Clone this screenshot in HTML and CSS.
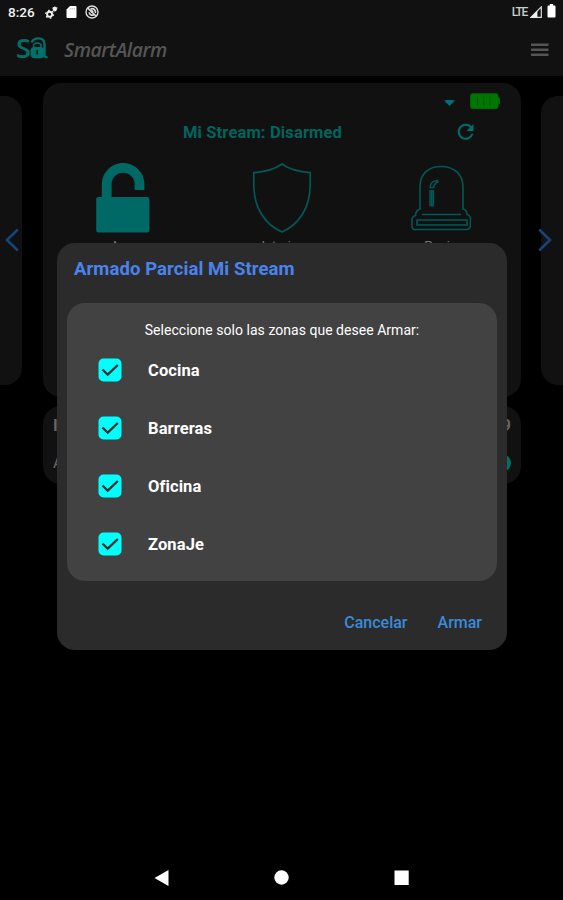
FILE: index.html
```html
<!DOCTYPE html>
<html lang="es">
<head>
<meta charset="utf-8">
<title>SmartAlarm</title>
<link rel="stylesheet" href="styles.css">
</head>
<body>
<div class="screen">
  <div class="status">
    <span class="clock">8:26</span>
    <svg class="s-gear" width="13" height="13" viewBox="0 0 13 13"><circle cx="4.6" cy="8.2" r="2.5" fill="none" stroke="#eee" stroke-width="1.9"/><circle cx="4.6" cy="8.2" r="3.9" fill="none" stroke="#eee" stroke-width="1.2" stroke-dasharray="1.8 2.28"/><circle cx="9.8" cy="3" r="2.2" fill="#eee"/><path d="M7.5 2h5M9.8.5v5" stroke="#eee"/></svg>
    <svg class="s-card" width="11" height="12" viewBox="0 0 11 12"><path d="M4 0h5.500q1 0 1 1v10q0 1-1 1h-8q-1 0-1-1V3.500z" fill="#fff"/><path d="M4.200 2v1.600M6.200 2v1.600M8.200 2v1.600" stroke="#aaa" stroke-width=".8"/></svg>
    <svg class="s-circle" width="14" height="14" viewBox="0 0 14 14" fill="none" stroke="#ddd"><circle cx="7" cy="7" r="6" stroke-width="1.400"/><path d="M2.500 2.800l9 8.700M4.200 7.200a3 3 0 0 0 4.500 2.500M5.500 4.200a3.300 3.300 0 0 1 4.800 3.900" stroke-width="1.600"/><circle cx="7" cy="6.600" r="1.100" fill="#ddd"/></svg>
    <span class="lte">LTE</span>
    <svg class="s-signal" width="12" height="12" viewBox="0 0 12 12"><path d="M.9 11.300L11.300.9v10.400z" fill="none" stroke="#ddd" stroke-width="1.200"/><path d="M.5 11.500L7.400 4.600v6.900z" fill="#eee"/></svg>
    <svg class="s-batt" width="9" height="14" viewBox="0 0 9 14"><path d="M2.800 0h3.400v1.500h1.300q1 0 1 1V12.500q0 1-1 1h-6q-1 0-1-1v-10q0-1 1-1h1.300z" fill="#fff"/></svg>
  </div>
  <header class="bar">
    <div class="logo"><span class="logo-s">S</span><svg width="18" height="22" viewBox="0 0 18 22"><path d="M1.500 5.500C3 2.400 5 1.400 8.300 1.400c4.400 0 6.200 2.500 6.200 6v11.300q0 1.600 3 1.500" fill="none" stroke="#00716a" stroke-width="2.400"/><rect x=".5" y="10" width="14" height="11.200" rx="4" fill="#00716a"/><path d="M3.500 11V9c0-4 7.500-4 7.500 0v2" fill="none" stroke="#00716a" stroke-width="1.500"/><path d="M7.200 13v4.500" stroke="#111" stroke-width="1.600"/></svg></div>
    <span class="brand">SmartAlarm</span>
    <svg class="menu" width="18" height="14" viewBox="0 0 18 14"><path d="M0 1.700h17.500M0 6.700h17.500M0 11.700h17.500" stroke="#555" stroke-width="2.500"/></svg>
  </header>
  <main class="carousel">
    <div class="side prev"></div>
    <section class="card">
      <div class="signals">
        <svg class="wifi" width="11" height="6" viewBox="0 0 11 6"><path d="M0 .4q5.500-1 11 0L5.500 6z" fill="#006f76"/></svg>
        <svg width="30" height="17" viewBox="0 0 30 17"><rect x=".6" y=".8" width="27.400" height="14.800" rx="2" fill="#007800" stroke="#006c00"/><rect x="28" y="4.500" width="2" height="6.500" rx=".8" fill="#006a00"/><path d="M7.500 3.500v9.500M13.800 3.500v9.500M20 3.500v9.500" stroke="#005c00" stroke-width="1.300"/></svg>
      </div>
      <div class="state"><span class="state-name">Mi Stream: Disarmed</span>
        <svg class="refresh" width="18" height="18" viewBox="0 0 18 18"><path d="M14.600 5A7 7 0 1 0 15.400 10.800" fill="none" stroke="#006f6a" stroke-width="2"/><path d="M16.500 1v7h-7z" fill="#006f6a"/></svg>
      </div>
      <div class="modes">
        <div class="mode"><svg width="54" height="70" viewBox="0 0 54 70"><path d="M10.700 36V21.200a16.400 16.400 0 0 1 32.800 0V27" fill="none" stroke="#006965" stroke-width="9.800"/><rect x=".2" y="34" width="53.200" height="35.500" rx="2.500" fill="#006965"/></svg><span>Arm</span></div>
        <div class="mode"><svg width="60" height="70" viewBox="0 0 60 70"><path d="M30 1C23 6 12 9 1.800 9.600V23C2 46 14 62 30 69 46 62 57.800 46 58.200 23V9.600C48 9 37 6 30 1z" fill="none" stroke="#005a57" stroke-width="1.700"/></svg><span>Interior</span></div>
        <div class="mode"><svg width="60" height="70" viewBox="0 0 60 70" fill="none" stroke="#005a57" stroke-width="1.600"><path d="M9 46V24C9 11 17 3.500 30 3.500S52 11 52 24v22q4 1 4 5.500 3.500 1 3.500 4.500v6q0 4.500-4.500 4.500H5.500Q1 67.500 1 63v-6q0-3.500 3.500-4.500Q5 47 9 46zM11 51.500h39M6 57h50v5H6z"/><path d="M19 24.500q.3-6.500 7.500-7l.5 1.500q-3.500 1-4.500 5.500zM19 28h3.500v14.500H19z" stroke-width="1.400"/><path d="M20.700 28v14" stroke-width="2"/></svg><span>Panic</span></div>
      </div>
    </section>
    <div class="side next"></div>
    <svg class="arrow left" width="15" height="24" viewBox="0 0 15 24"><path d="M12.800 1.500L2 12l10.800 10.500" fill="none" stroke="#124676" stroke-width="2.600"/></svg>
    <svg class="arrow right" width="15" height="24" viewBox="0 0 15 24"><path d="M2.200 1.500L13 12 2.200 22.500" fill="none" stroke="#124676" stroke-width="2.600"/></svg>
  </main>
  <section class="info">
    <div class="info-row"><span>I</span><span>9</span></div>
    <div class="info-row"><span class="thin">A</span><i class="knob"></i></div>
  </section>
  <nav class="nav">
    <svg width="16" height="18" viewBox="0 0 16 18"><path d="M.5 9L14.500 1v16z" fill="#fff"/></svg>
    <svg width="16" height="18" viewBox="0 0 16 18"><circle cx="7.500" cy="8.500" r="7.200" fill="#fff"/></svg>
    <svg width="16" height="18" viewBox="0 0 16 18"><path d="M.5 1.500h14.200V16H.5z" fill="#fff"/></svg>
  </nav>

  <div class="dialog" role="dialog">
    <h2>Armado Parcial Mi Stream</h2>
    <div class="zones">
      <p>Seleccione solo las zonas que desee Armar:</p>
      <div class="zone"><svg width="24" height="24" viewBox="0 0 24 24"><rect x=".5" y=".5" width="23" height="23" rx="5" fill="#00ffff"/><path d="M4.500 11.500l5.200 5.200L19.800 7" fill="none" stroke="#152c2c" stroke-width="2.300"/></svg><span>Cocina</span></div>
      <div class="zone"><svg width="24" height="24" viewBox="0 0 24 24"><rect x=".5" y=".5" width="23" height="23" rx="5" fill="#00ffff"/><path d="M4.500 11.500l5.200 5.200L19.800 7" fill="none" stroke="#152c2c" stroke-width="2.300"/></svg><span>Barreras</span></div>
      <div class="zone"><svg width="24" height="24" viewBox="0 0 24 24"><rect x=".5" y=".5" width="23" height="23" rx="5" fill="#00ffff"/><path d="M4.500 11.500l5.200 5.200L19.800 7" fill="none" stroke="#152c2c" stroke-width="2.300"/></svg><span>Oficina</span></div>
      <div class="zone"><svg width="24" height="24" viewBox="0 0 24 24"><rect x=".5" y=".5" width="23" height="23" rx="5" fill="#00ffff"/><path d="M4.500 11.500l5.200 5.200L19.800 7" fill="none" stroke="#152c2c" stroke-width="2.300"/></svg><span>ZonaJe</span></div>
    </div>
    <div class="actions"><span>Cancelar</span><span>Armar</span></div>
  </div>
</div>
</body>
</html>
```
FILE: styles.css
```css
* { box-sizing: border-box; }
body { margin: 0; background: #000; font-family: Roboto, "Liberation Sans", sans-serif; }
svg { display: block; flex: none; }
.screen { position: relative; display: flex; flex-direction: column; width: 563px; height: 900px; overflow: hidden; background: #000; }

.status { display: flex; align-items: center; height: 24px; padding: 0 7px 0 8px; background: #111; color: #f2f2f2; }
.clock { width: 27px; font-size: 13.500px; font-weight: 500; white-space: nowrap; }
.s-gear { margin-left: 10px; }
.s-card { margin-left: 8px; }
.s-circle { margin-left: 8px; }
.lte { margin-left: auto; font-size: 12px; font-weight: 500; letter-spacing: -1.3px; color: #ccc; }
.s-signal { margin-left: 3px; }
.s-batt { margin: -2px 0 0 5px; }

.bar { display: flex; align-items: center; height: 52px; padding: 0 14px 0 16px; background: #111; }
.logo { display: flex; align-items: center; width: 48px; margin-top: -4px; }
.logo-s { width: 14px; font: 600 27px/22px "Open Sans", sans-serif; color: #00716a; }
.brand { margin-top: -2px; font-family: "Open Sans", sans-serif; font-size: 19.500px; font-style: italic; font-weight: 600; letter-spacing: -.45px; color: #555; }
.menu { margin-left: auto; }

.carousel { position: relative; display: flex; align-items: flex-start; justify-content: space-between; height: 330px; padding-top: 7px; }
.side { width: 22px; height: 289px; margin-top: 13px; background: #111; }
.prev { border-radius: 0 17px 17px 0; }
.next { border-radius: 17px 0 0 17px; }
.card { width: 478px; height: 314px; border-radius: 18px; background: #111; }
.signals { display: flex; align-items: center; justify-content: flex-end; gap: 15px; padding: 10px 21px 0 0; }
.wifi { margin-top: 3px; }
.state { display: grid; grid-template-columns: 1fr auto 1fr; align-items: center; height: 24px; margin-top: 10px; padding-right: 38px; }
.state-name { grid-column: 2; font-size: 16.500px; font-weight: 700; letter-spacing: .15px; color: #00645f; white-space: nowrap; }
.refresh { justify-self: end; margin-right: 8px; }
.modes { display: grid; grid-template-columns: repeat(3, 1fr); margin: 19px 0 0 1px; }
.mode { display: flex; flex-direction: column; align-items: center; }
.mode:last-child { margin-left: -1px; }
.mode span { margin-top: 5px; font-size: 13px; line-height: 16px; color: #777; }
.arrow { position: absolute; top: 152px; }
.left { left: 5px; }
.right { right: 11px; }

.info { width: 478px; height: 78px; margin-left: 43px; padding: 7px 10px 0; border-radius: 18px; background: #111; color: #666; font-size: 16px; font-weight: 700; }
.info-row { display: flex; align-items: center; justify-content: space-between; height: 25px; }
.info-row + .info-row { margin-top: 12px; }
.thin { font-weight: 400; }
.knob { width: 18px; height: 18px; border-radius: 50%; background: #006f6a; }

.nav { display: flex; justify-content: center; gap: 104px; margin-top: auto; height: 31px; }

.dialog { position: absolute; left: 57px; top: 243px; width: 450px; height: 407px; padding: 0 10px; border-radius: 18px; background: #2b2b2b; }
.dialog h2 { margin: 0; padding-left: 7px; height: 60px; font-size: 18.500px; font-weight: 700; letter-spacing: .08px; line-height: 53px; color: #4b83ed; white-space: nowrap; }
.zones { height: 278px; border-radius: 18px; background: #424242; color: #fff; }
.zones p { margin: 0; padding-top: 17px; height: 38px; font-size: 14px; letter-spacing: .03px; line-height: 20px; text-align: center; white-space: nowrap; }
.zone { display: flex; align-items: center; gap: 26px; height: 58px; padding-left: 31px; font-size: 16.500px; font-weight: 700; letter-spacing: .1px; }
.actions { display: flex; justify-content: flex-end; gap: 30px; padding: 31px 15px 0 0; font-size: 16px; font-weight: 500; line-height: 22px; color: #398bdc; }
```
